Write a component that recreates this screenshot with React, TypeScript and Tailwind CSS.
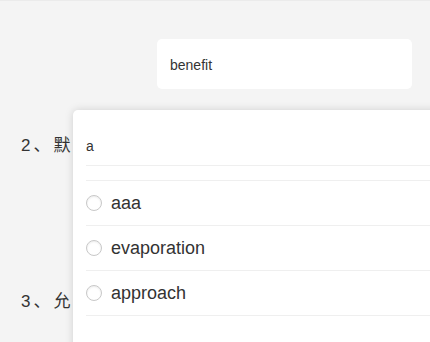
import React from "react";

const items = ["aaa", "evaporation", "approach"];

export default function App() {
  return (
    <div
      className="relative h-[342px] w-[430px] overflow-hidden bg-[#f4f4f4]"
      style={{ fontFamily: '"Liberation Sans", Arial, "Noto Sans CJK SC", sans-serif' }}
    >
      <div className="border-t border-[#ebebeb]" />
      <div className="ml-[157px] mt-[38px] flex h-[50px] w-[255px] items-center rounded-[5px] bg-white pl-[13px] pt-[2px] text-[14px] text-[#333]">
        benefit
      </div>
      <div className="ml-[21px] mt-[44px] w-[54px] overflow-hidden whitespace-nowrap text-[17px] leading-[26px] tracking-[3px] text-[#333]">2、默认答案</div>
      <div className="ml-[21px] mt-[130px] w-[54px] overflow-hidden whitespace-nowrap text-[17px] leading-[26px] tracking-[3px] text-[#333]">3、允许填空</div>

      <div className="absolute left-[73px] top-[110px] h-[260px] w-[380px] rounded-tl-[5px] bg-white pl-[13px] shadow-[0_0_8px_rgba(0,0,0,0.15)]">
        <div className="flex h-[56px] items-end border-b border-[#efefef] pb-[8px] text-[14px] text-[#333]">a</div>
        <div className="mt-[14px] border-t border-[#efefef]">
          {items.map((t) => (
            <div key={t} className="flex h-[45px] items-center border-b border-[#efefef]">
              <span className="h-[16px] w-[16px] rounded-full border border-[#c8c8c8] bg-white shadow-[inset_0_1px_2px_rgba(0,0,0,0.08)]" />
              <span className="ml-[9px] pt-[1px] text-[18px] text-[#333]">{t}</span>
            </div>
          ))}
        </div>
      </div>
    </div>
  );
}
